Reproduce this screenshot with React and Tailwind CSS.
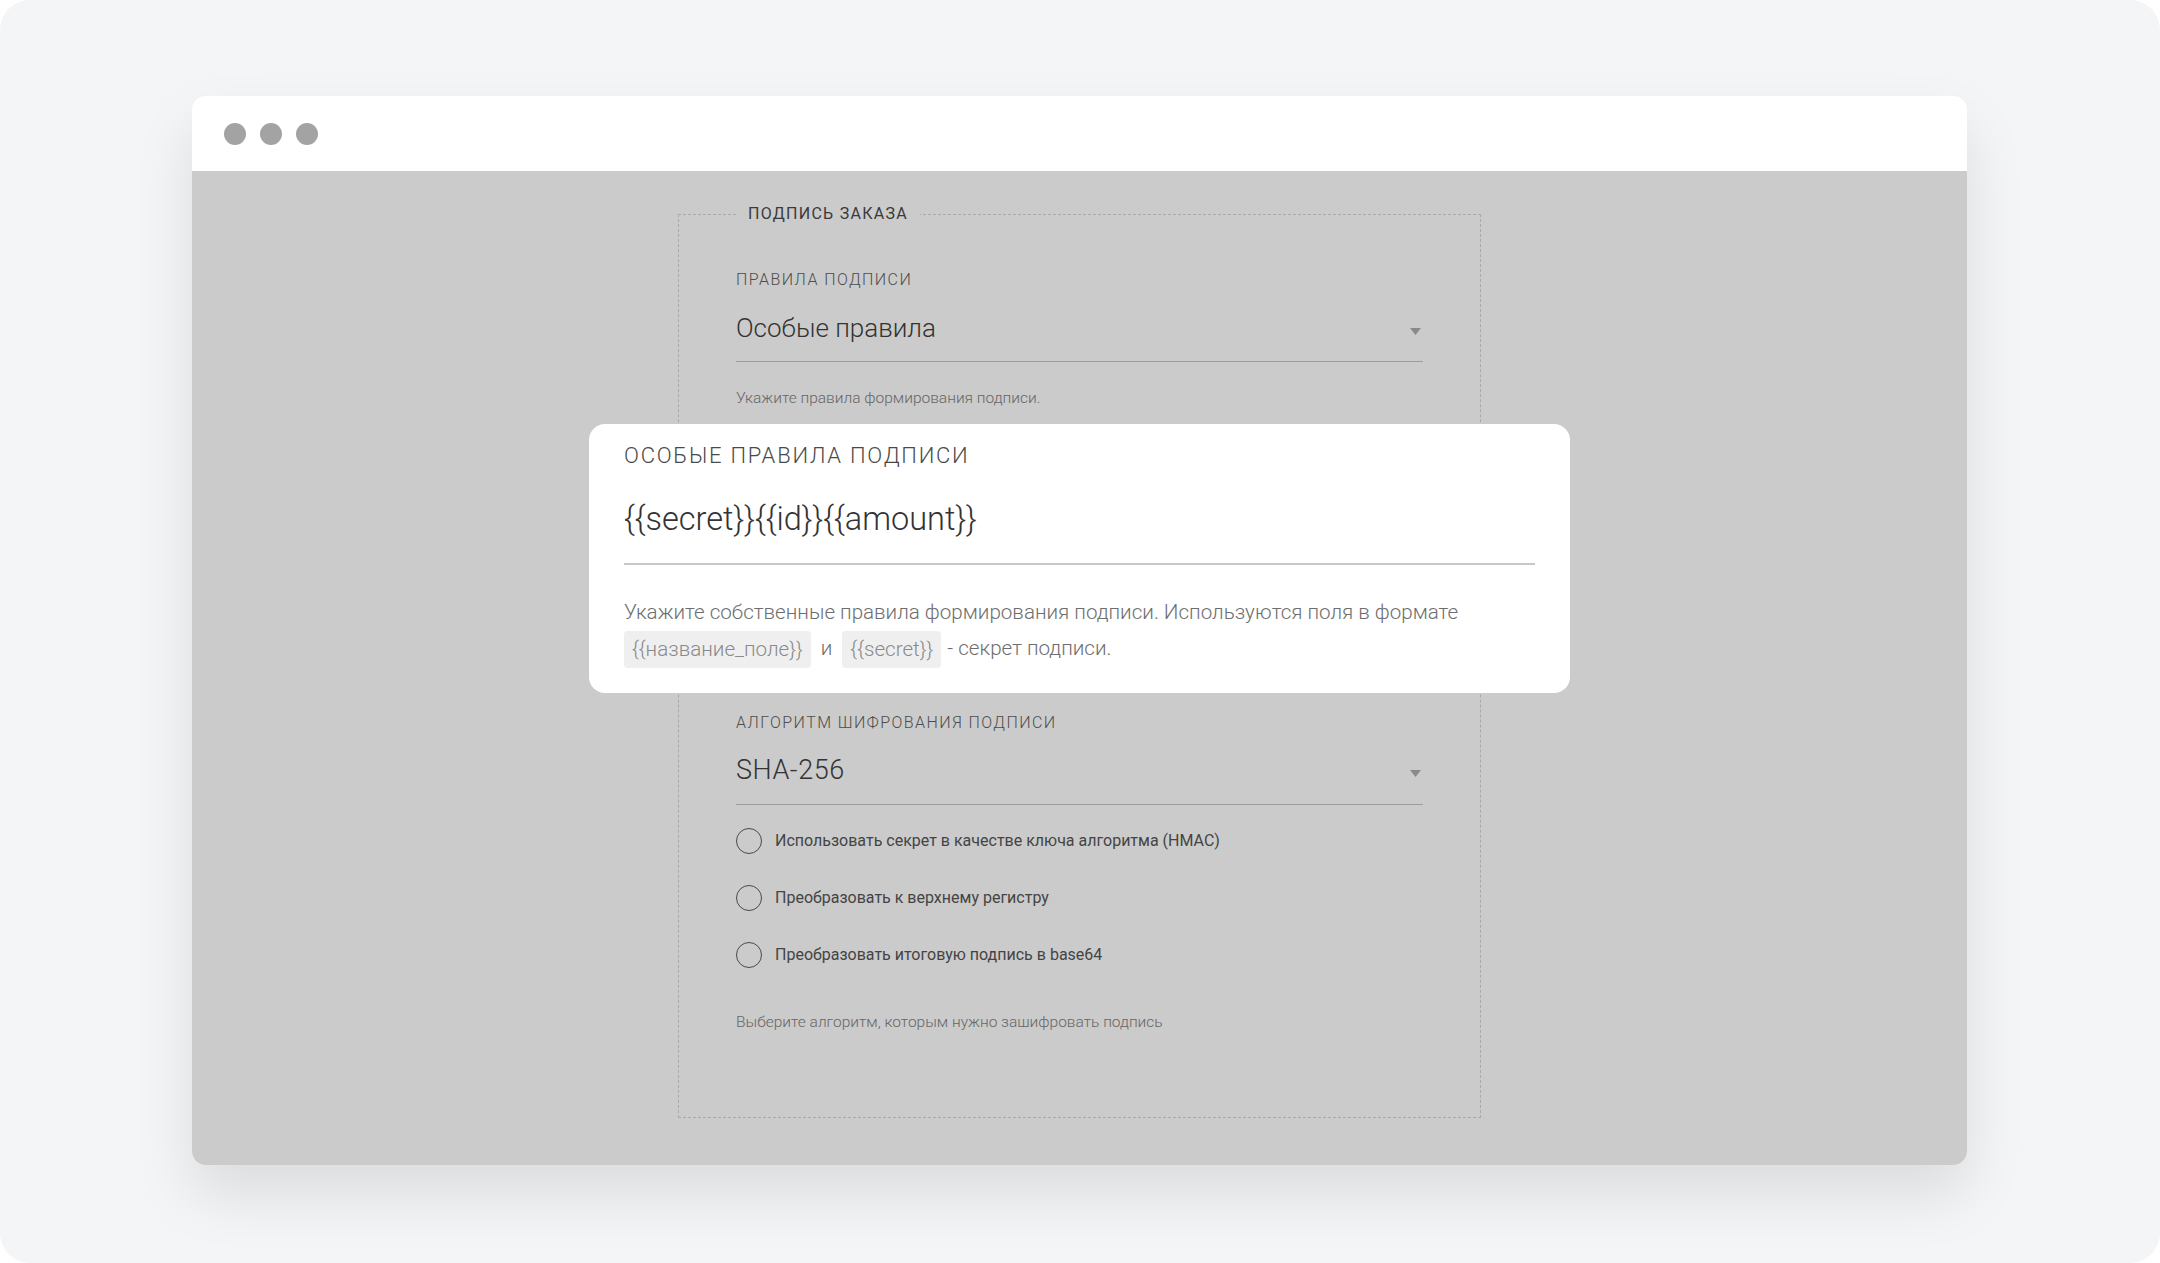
import React from 'react';

const font = { fontFamily: 'Roboto, "Noto Sans", sans-serif' };

const Arrow = () => (
    <svg width="11" height="7" viewBox="0 0 11 7" className="mb-[-6px] mr-[2px]">
        <path d="M0 0 H11 L5.5 7 Z" fill="#8a8a8a" />
    </svg>
);

const Radio = ({ label }) => (
    <label className="flex items-center h-[28px]">
        <span className="w-[26px] h-[26px] rounded-full border-[1.5px] border-[#4a4a4a] shrink-0" />
        <span className="ml-[13px] text-[16px] text-[#444]">{label}</span>
    </label>
);

const Chip = ({ children }) => (
    <span className="inline-block h-[37px] leading-[37px] px-[8px] rounded-[4px] bg-[#efeff0] text-[#8a8a8a] align-middle">
        {children}
    </span>
);

const App = () => {
    return (
        <div className="w-full h-[1263px] bg-white" style={font}>
            <div className="w-full h-full rounded-[30px] bg-[#f4f5f7] pt-[96px] pl-[192px]">
                <div className="w-[1775px] rounded-[14px] overflow-hidden shadow-[0_30px_60px_rgba(0,0,0,0.10)]">
                    {/* header */}
                    <div className="h-[75px] bg-white flex items-center pl-[32px] gap-[14px]">
                        <span className="w-[22px] h-[22px] rounded-full bg-[#a3a3a3]" />
                        <span className="w-[22px] h-[22px] rounded-full bg-[#a3a3a3]" />
                        <span className="w-[22px] h-[22px] rounded-full bg-[#a3a3a3]" />
                    </div>

                    {/* content */}
                    <div className="relative h-[994px] bg-[#cbcbcb] pt-[33px] pl-[486px]">
                        <fieldset className="w-[803px] border border-dashed border-[#a9a9a9] px-[57px] pb-[85px]">
                            <legend className="px-[12px] h-[20px] leading-[20px] text-[16px] tracking-[0.08em] text-[#3a3a3a]">
                                ПОДПИСЬ ЗАКАЗА
                            </legend>

                            <div className="mt-[46px] h-[20px] leading-[20px] text-[16px] tracking-[0.09em] text-[#4d4d4d] font-light">
                                ПРАВИЛА ПОДПИСИ
                            </div>
                            <div className="mt-[16px] pt-[6px] pb-[17px] flex items-center justify-between border-b border-[#9c9c9c]">
                                <span className="text-[26px] leading-[32px] text-[#333] font-light">Особые правила</span>
                                <Arrow />
                            </div>
                            <div className="mt-[26px] h-[20px] leading-[20px] text-[15.5px] text-[#666] font-light">
                                Укажите правила формирования подписи.
                            </div>

                            <div className="h-[305px]" />

                            <div className="h-[20px] leading-[20px] text-[16px] tracking-[0.09em] text-[#4d4d4d] font-light">
                                АЛГОРИТМ ШИФРОВАНИЯ ПОДПИСИ
                            </div>
                            <div className="mt-[15px] pt-[6px] pb-[18px] flex items-center justify-between border-b border-[#9c9c9c]">
                                <span className="text-[27px] leading-[32px] text-[#333] font-light tracking-[0.02em]">SHA-256</span>
                                <Arrow />
                            </div>

                            <div className="mt-[22px] flex flex-col gap-[29px]">
                                <Radio label="Использовать секрет в качестве ключа алгоритма (HMAC)" />
                                <Radio label="Преобразовать к верхнему регистру" />
                                <Radio label="Преобразовать итоговую подпись в base64" />
                            </div>

                            <div className="mt-[43px] h-[20px] leading-[20px] text-[15.5px] text-[#666] font-light">
                                Выберите алгоритм, которым нужно зашифровать подпись
                            </div>
                        </fieldset>

                        {/* highlighted field card */}
                        <div className="absolute left-[397px] top-[253px] w-[981px] h-[269px] bg-white rounded-[16px] px-[35px] pt-[20px]">
                            <div className="h-[24px] leading-[24px] text-[22px] tracking-[0.08em] text-[#4a4a4a] font-light">
                                ОСОБЫЕ ПРАВИЛА ПОДПИСИ
                            </div>
                            <div className="mt-[29px] pb-[22px] border-b-2 border-[#c8c8c8]">
                                <div className="h-[44px] leading-[44px] text-[32.5px] text-[#333] font-light">
                                    {'{{secret}}{{id}}{{amount}}'}
                                </div>
                            </div>
                            <div className="mt-[29px] text-[20.6px] leading-[36px] text-[#6e6e6e] font-light">
                                Укажите собственные правила формирования подписи. Используются поля в формате
                                <br />
                                <Chip>{'{{название_поле}}'}</Chip>
                                <span className="mx-[10px]">и</span>
                                <Chip>{'{{secret}}'}</Chip>
                                <span className="ml-[6px]">- секрет подписи.</span>
                            </div>
                        </div>
                    </div>
                </div>
            </div>
        </div>
    );
};

export default App;
